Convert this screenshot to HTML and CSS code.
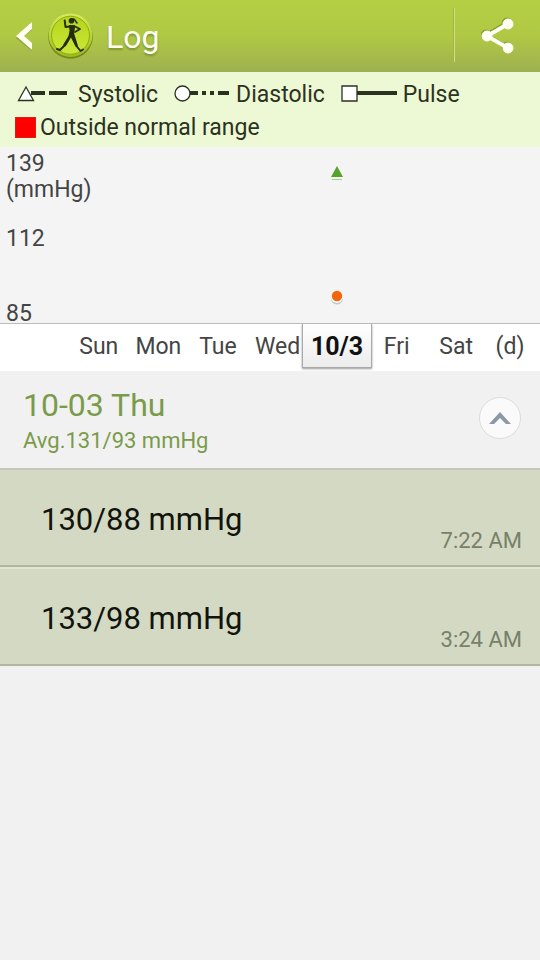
FILE: index.html
```html
<!DOCTYPE html>
<html lang="en">
<head>
<meta charset="utf-8">
<meta name="viewport" content="width=device-width, initial-scale=1">
<title>Log</title>
<link rel="stylesheet" href="styles.css">
</head>
<body>
<header class="bar">
  <button class="back" aria-label="Back">
    <svg width="16" height="30" viewBox="0 0 16 30"><path d="M16 2v6L7 15l9 8v6L0 16z" fill="#6f8a28" opacity=".6"/><path d="M16 0v7L8 14l8 7v7L0 14z" fill="#fffff4"/></svg>
  </button>
  <svg class="logo" width="46" height="48" viewBox="0 0 46 48" aria-hidden="true">
    <defs>
      <linearGradient id="rim" x1="0" y1="0" x2="0" y2="1"><stop offset="0" stop-color="#d8ea5c"/><stop offset="1" stop-color="#9dbb1a"/></linearGradient>
      <linearGradient id="disc" x1="0" y1="0" x2="0" y2="1"><stop offset="0" stop-color="#b5d31c"/><stop offset="1" stop-color="#cbe83a"/></linearGradient>
    </defs>
    <circle cx="22.500" cy="23.500" r="22.300" fill="#5f7a10" opacity=".75"/>
    <circle cx="22.500" cy="22.200" r="21.800" fill="url(#rim)"/>
    <circle cx="22.500" cy="22.200" r="19" fill="url(#disc)" stroke="#8fae0c" stroke-width="1"/>
    <g fill="none" stroke="#252d0c" stroke-linecap="round" stroke-linejoin="round">
      <path d="M22 13.500l-4.500.5-.8-6.500" stroke-width="2"/>
      <path d="M26 13l6 3-5 3" stroke-width="1.800"/>
      <path d="M25 6c2.500 0 2 2 4 4" stroke-width="1.600"/>
      <path d="M20 27l-3 5-5 5-3-1" stroke-width="2"/>
      <path d="M26.500 28l2 5 4 5 2.500-1.500" stroke-width="2"/>
    </g>
    <path d="M21 12h5.500l.5 3-1 5 1.500 5 2.500 8-2.500.5-4.500-9-5.500 9-2.500-1.500 5.500-9 1-5z" fill="#252d0c"/>
    <circle cx="23.500" cy="7.800" r="2.800" fill="#252d0c"/>
  </svg>
  <h1 class="title">Log</h1>
  <button class="share" aria-label="Share">
    <svg width="34" height="40" viewBox="0 0 34 40">
      <g fill="#6f8a28" stroke="#6f8a28" opacity=".65" transform="translate(-1 -1)"><path d="M27 9L6 21l21 12" fill="none" stroke-width="4"/><circle cx="27" cy="9" r="5"/><circle cx="6" cy="21" r="5"/><circle cx="27" cy="33" r="5"/></g>
      <g fill="#fffff4" stroke="#fffff4"><path d="M27 9L6 21l21 12" fill="none" stroke-width="4"/><circle cx="27" cy="9" r="5"/><circle cx="6" cy="21" r="5"/><circle cx="27" cy="33" r="5"/></g>
    </svg>
  </button>
</header>
<main>
  <ul class="legend">
    <li class="key systolic">
      <svg width="52" height="18" viewBox="0 0 52 18"><path d="M16 8h14M34 8h19" stroke="#2c3220" stroke-width="4"/><path d="M11 2L18.500 15.500H3.500z" fill="#fff" stroke="#2c3220" stroke-width="1.300"/></svg>
      Systolic
    </li>
    <li class="key">
      <svg width="56" height="18" viewBox="0 0 56 18"><path d="M15 8h9M28 8h4M36 8h4M44 8h11" stroke="#2c3220" stroke-width="4"/><circle cx="8.500" cy="8.500" r="7.500" fill="#fff" stroke="#2c3220" stroke-width="1.300"/></svg>
      Diastolic
    </li>
    <li class="key">
      <svg width="56" height="18" viewBox="0 0 56 18"><path d="M15 8h41" stroke="#2c3220" stroke-width="4"/><path d="M1 1h15v15H1z" fill="#fff" stroke="#2c3220" stroke-width="1.300"/></svg>
      Pulse
    </li>
    <li class="key outside"><span class="swatch"></span>Outside normal range</li>
  </ul>
  <section class="chart" aria-label="Blood pressure">
    <div class="scale"><span>139<br>(mmHg)</span><span>112</span><span>85</span></div>
    <svg class="plot" width="14" height="176" viewBox="0 0 14 176" aria-hidden="true">
      <path d="M7 19l6 11H1z" fill="#57a22c"/>
      <path d="M2 32.500h10" stroke="#a5d08c" stroke-width="1"/>
      <circle cx="7" cy="151.500" r="6" fill="#c2c2c2"/>
      <circle cx="7" cy="150" r="6" fill="#fff"/>
      <circle cx="7" cy="149" r="5.200" fill="#f2650c"/>
    </svg>
  </section>
  <nav class="days" aria-label="Days">
    <button class="day first">Sun</button>
    <button class="day">Mon</button>
    <button class="day">Tue</button>
    <button class="day">Wed</button>
    <button class="day selected" aria-current="date">10/3</button>
    <button class="day">Fri</button>
    <button class="day">Sat</button>
    <span class="unit">(d)</span>
  </nav>
  <section class="summary">
    <div>
      <h2 class="date">10-03 Thu</h2>
      <p class="average">Avg.131/93 mmHg</p>
    </div>
    <button class="collapse" aria-label="Collapse">
      <svg width="24" height="14" viewBox="0 0 24 14"><path d="M1 13L12 1l11 12h-5l-6-6-6 6z" fill="#8c99a5"/></svg>
    </button>
  </section>
  <ul class="entries">
    <li class="entry"><span class="reading">130/88 mmHg</span><time class="time">7:22 AM</time></li>
    <li class="entry"><span class="reading">133/98 mmHg</span><time class="time">3:24 AM</time></li>
  </ul>
</main>
</body>
</html>
```
FILE: styles.css
```css
* { box-sizing: border-box; }
body {
  margin: 0;
  min-height: 100vh;
  background: #f1f1f1;
  color: #444;
  font: 23px/26px Roboto, "Liberation Sans", sans-serif;
}
h1, h2, p, ul { margin: 0; padding: 0; font-weight: 400; }
ul { list-style: none; }
button { border: 0; padding: 0; background: none; color: inherit; font: inherit; }
svg { display: block; flex: none; }

.bar {
  display: flex;
  align-items: center;
  height: 72px;
  padding-left: 16px;
  background: linear-gradient(#b4cf43, #b0c944 50%, #9fb150);
  border-bottom: 2px solid #9bb053;
}
.back { padding-top: 4px; }
.logo { margin: 4px 12px 0 16px; }
.title {
  flex: 1;
  padding-top: 4px;
  color: #fffff4;
  font-size: 32px;
  line-height: 40px;
  text-shadow: 0 2px 2px #7d9433;
}
.share {
  display: flex;
  align-items: center;
  justify-content: center;
  width: 86px;
  height: 54px;
  border-left: 1px solid #d0e080;
  box-shadow: -1px 0 #a0b545;
}

.legend {
  display: flex;
  flex-wrap: wrap;
  align-content: flex-start;
  column-gap: 16px;
  row-gap: 7px;
  min-height: 75px;
  padding: 10px 15px 0;
  background: #edf8d5;
  color: #2c3220;
}
.key { display: flex; align-items: center; gap: 6px; }
.key svg { margin-top: -2px; }
.systolic { gap: 11px; }
.outside { flex-basis: 100%; gap: 4px; }
.swatch { width: 21px; height: 21px; margin-top: -2px; background: #f00; border: 1px solid #d8200c; }

.chart, .days { display: grid; grid-template-columns: 69px repeat(7, minmax(0, 1fr)) 54px; }
.chart { height: 176px; background: #f4f4f4; }
.scale {
  display: grid;
  grid-template-rows: 75px 75px 22px;
  padding: 4px 0 0 6px;
}
.plot { grid-column: 6; justify-self: center; }

.days {
  height: 48px;
  background: #fff;
  border-top: 1px solid #bbb;
}
.day, .unit { height: 44px; padding-top: 2px; text-align: center; white-space: nowrap; }
.unit { line-height: 44px; padding: 1px 6px 0 0; }
.first { grid-column: 2; }
.selected {
  justify-self: center;
  width: 70px;
  background: linear-gradient(#fff, #ececec);
  border: 1px solid #aaa;
  border-top: 0;
  box-shadow: 0 1px 2px #999;
  color: #111;
  font-size: 25px;
  font-weight: 700;
}

.summary {
  display: flex;
  align-items: center;
  justify-content: space-between;
  height: 97px;
  padding: 0 19px 0 23px;
}
.date { padding-top: 4px; color: #7a9b4a; font-size: 32px; line-height: 38px; }
.average { color: #7a9b4a; font-size: 22px; line-height: 34px; }
.collapse {
  display: grid;
  place-items: center;
  width: 42px;
  height: 42px;
  margin-bottom: 4px;
  border: 1px solid #dcdcdc;
  border-radius: 50%;
  background: #fafafb;
}

.entry {
  display: flex;
  align-items: center;
  justify-content: space-between;
  height: 99px;
  padding: 4px 18px 0 41px;
  background: #d4d9c3;
  border-top: 2px solid #e1e6d2;
  border-bottom: 2px solid #b1b6a3;
}
.entry:first-child { border-top-color: #c3c7b8; }
.reading { color: #11140c; font-size: 31px; line-height: 40px; }
.time { align-self: flex-end; padding-bottom: 11px; color: #76816a; font-size: 22px; }
```
